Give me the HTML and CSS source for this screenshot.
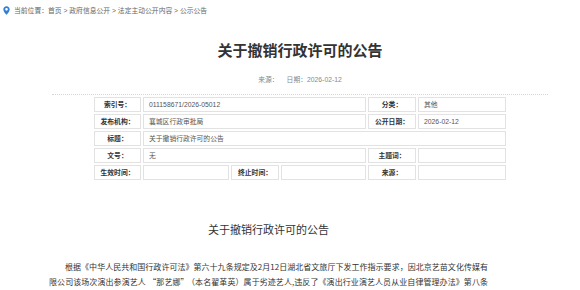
FILE: index.html
```html
<!DOCTYPE html>
<html lang="zh-CN">
<head>
<meta charset="utf-8">
<title>关于撤销行政许可的公告</title>
<link rel="stylesheet" href="styles.css">
</head>
<body>
<div class="crumb">
  <svg class="pin" viewBox="0 0 10 12" width="7" height="9"><path d="M5 0C2.4 0 .5 1.9.5 4.4.5 7.6 5 12 5 12s4.5-4.4 4.5-7.6C9.5 1.9 7.6 0 5 0zm0 6.2a1.9 1.9 0 1 1 0-3.8 1.9 1.9 0 0 1 0 3.8z" fill="#2f7fd6"/></svg>
  <span>当前位置：首页 &gt; 政府信息公开 &gt; 法定主动公开内容 &gt; 公示公告</span>
</div>
<div class="main">
  <h1 class="title">关于撤销行政许可的公告</h1>
  <div class="meta"><span>来源：</span><span>日期：2026-02-12</span></div>
  <div class="rule"></div>
  <table class="info">
    <colgroup>
      <col class="c1"><col class="c2"><col class="c3"><col class="c4"><col class="c5"><col class="c6">
    </colgroup>
    <tr><th>索引号：</th><td colspan="3">011158671/2026-05012</td><th>分类：</th><td>其他</td></tr>
    <tr><th>发布机构：</th><td colspan="3">襄城区行政审批局</td><th>公开日期：</th><td>2026-02-12</td></tr>
    <tr><th>标题：</th><td colspan="5">关于撤销行政许可的公告</td></tr>
    <tr><th>文号：</th><td colspan="3">无</td><th>主题词：</th><td></td></tr>
    <tr><th>生效时间：</th><td></td><th>终止时间：</th><td></td><th>来源：</th><td></td></tr>
  </table>
</div>
<div class="article">
  <h2 class="art-title">关于撤销行政许可的公告</h2>
  <p class="para">根据《中华人民共和国行政许可法》第六十九条规定及2月12日湖北省文旅厅下发工作指示要求，因北京艺苗文化传媒有限公司该场次演出参演艺人<span class="fw">“那艺娜”</span>（本名翟革英）属于劣迹艺人,违反了《演出行业演艺人员从业自律管理办法》第八条规定，现撤销该场次演出的行政许可。</p>
</div>
</body>
</html>
```
FILE: styles.css
```css
html, body {
  margin: 0;
  padding: 0;
  background: #fff;
}
body {
  font-family: "Liberation Sans", "Noto Sans CJK SC", sans-serif;
  color: #333;
  width: 580px;
  height: 290px;
  overflow: hidden;
}
.crumb {
  display: flex;
  align-items: center;
  gap: 4px;
  height: 20px;
  padding-left: 3px;
  font-size: 6.8px;
  color: #666;
}
.pin {
  display: block;
}
.main {
  margin-left: 52px;
  width: 496px;
}
.title {
  margin: 20px 0 0;
  text-align: center;
  font-size: 15px;
  line-height: 22px;
  font-weight: bold;
  color: #333;
}
.meta {
  margin-top: 13px;
  display: flex;
  justify-content: center;
  gap: 8px;
  font-size: 6.8px;
  line-height: 10px;
  color: #888;
}
.rule {
  margin-top: 9px;
  border-top: 1px dotted #d6d6d6;
}
.info {
  margin-left: 40px;
  table-layout: fixed;
  border-collapse: separate;
  border-spacing: 2px;
  width: 416px;
  font-size: 6.8px;
}
.c1 { width: 47px; }
.c2 { width: 86px; }
.c3 { width: 48px; }
.c4 { width: 85px; }
.c5 { width: 48px; }
.c6 { width: 88px; }
.info th, .info td {
  border: 1px solid #e2e2e2;
  height: 15px;
  padding: 0 5px;
  line-height: 12px;
  white-space: nowrap;
  box-sizing: border-box;
}
.info th {
  text-align: center;
  font-weight: bold;
  color: #333;
}
.info td {
  text-align: left;
  color: #555;
}
.article {
  margin-left: 49px;
  width: 439px;
}
.art-title {
  margin: 40px 0 0;
  text-align: center;
  font-weight: normal;
  font-size: 11px;
  line-height: 16px;
  color: #333;
}
.para {
  margin: 21px 0 0;
  text-indent: 2em;
  font-family: "Noto Sans CJK SC", "Liberation Serif", serif;
  font-size: 8px;
  line-height: 15px;
  text-align: justify;
  color: #333;
}
.fw {
  padding: 0 0.3em;
}
```
